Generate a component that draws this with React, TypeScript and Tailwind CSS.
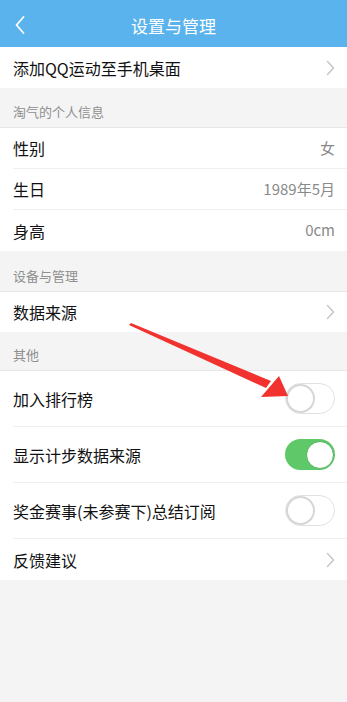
import React from 'react';

const font = { fontFamily: '"Noto Sans CJK SC", "Liberation Sans", sans-serif' };

const Chevron = () => (
  <svg width="9" height="16" viewBox="0 0 9 16" fill="none">
    <path d="M1.5 1.5 L7.5 8 L1.5 14.5" stroke="#c4c4c8" strokeWidth="1.4" strokeLinecap="round" strokeLinejoin="round" />
  </svg>
);

const Toggle = ({ on }: { on: boolean }) =>
  on ? (
    <div className="w-[50px] h-[31px] rounded-full bg-[#5fc868] flex items-center justify-end pr-[1px]">
      <div className="w-[28px] h-[28px] rounded-full bg-white border border-[#4fb35a]" />
    </div>
  ) : (
    <div className="w-[50px] h-[31px] rounded-full bg-white border border-[#e2e2e2] flex items-center">
      <div className="w-[29px] h-[29px] rounded-full bg-white border-2 border-[#d6d6d6]" />
    </div>
  );

const SectionTitle = ({ title, h }: { title: string; h: string }) => (
  <div className={`${h} flex items-end pb-[6px] px-[13px] text-[13px] text-[#8f8f8f] border-b border-[#e6e6e6]`}>{title}</div>
);

const Row = ({ label, right, h = 'h-[41px]', last = false }: { label: string; right?: React.ReactNode; h?: string; last?: boolean }) => (
  <div className={`${h} flex items-center pl-[13px]`}>
    <div className={`flex-1 h-full flex items-center pr-[12px] ${last ? '' : 'border-b border-[#efefef]'}`}>
      <span className="flex-1 text-[16px] text-[#111]">{label}</span>
      {right}
    </div>
  </div>
);

const Value = ({ v }: { v: string }) => <span className="text-[15px] text-[#8a8a8a]">{v}</span>;

export default function App() {
  return (
    <div className="relative w-[347px] h-[702px] bg-[#f4f4f4] overflow-hidden" style={font}>
      <div className="h-[47px] bg-[#5ab3ec] flex items-center relative">
        <div className="w-[40px] flex justify-center pt-[2px]">
          <svg width="10" height="18" viewBox="0 0 10 18" fill="none">
            <path d="M8.5 1 L1.5 9 L8.5 17" stroke="#fff" strokeWidth="1.8" strokeLinecap="round" strokeLinejoin="round" />
          </svg>
        </div>
        <div className="absolute inset-0 flex items-center justify-center pt-[3px] text-white text-[17px] leading-none pointer-events-none">设置与管理</div>
      </div>

      <div className="bg-white">
        <Row label="添加QQ运动至手机桌面" right={<Chevron />} last />
      </div>

      <SectionTitle title="淘气的个人信息" h="h-[40px]" />
      <div className="bg-white">
        <Row label="性别" right={<Value v="女" />} />
        <Row label="生日" right={<Value v="1989年5月" />} />
        <Row label="身高" right={<Value v="0cm" />} last />
      </div>

      <SectionTitle title="设备与管理" h="h-[41px]" />
      <div className="bg-white">
        <Row label="数据来源" right={<Chevron />} h="h-[40px]" last />
      </div>

      <SectionTitle title="其他" h="h-[39px]" />
      <div className="bg-white">
        <Row label="加入排行榜" right={<Toggle on={false} />} h="h-[56px]" />
        <Row label="显示计步数据来源" right={<Toggle on />} h="h-[56px]" />
        <Row label="奖金赛事(未参赛下)总结订阅" right={<Toggle on={false} />} h="h-[56px]" />
        <Row label="反馈建议" right={<Chevron />} h="h-[41px]" last />
      </div>

      <svg className="absolute left-0 top-0 pointer-events-none" width="347" height="702" viewBox="0 0 347 702">
        <polygon points="129,325 131,323 271,381 266,388" fill="#f1322f" />
        <polygon points="288,396 261,397 279,376" fill="#f1322f" />
      </svg>
    </div>
  );
}
